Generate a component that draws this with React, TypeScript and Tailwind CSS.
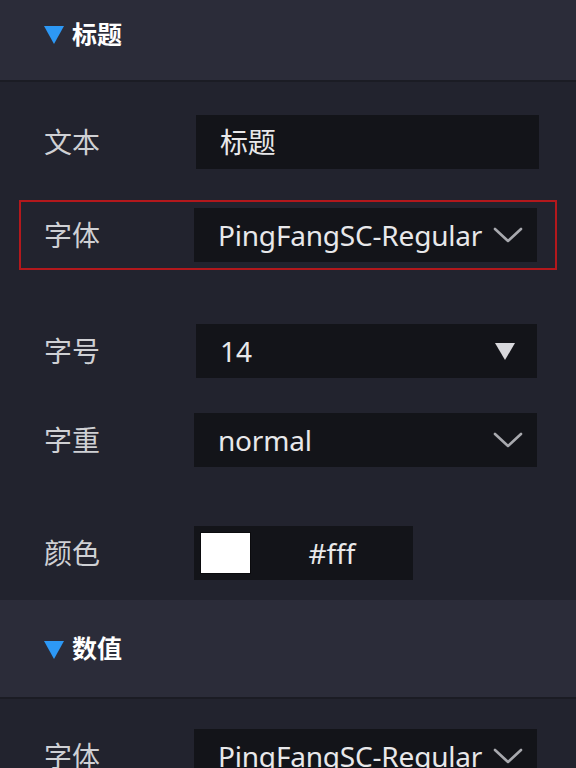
import React from "react";

const cjk = "font-['Noto_Sans','Noto_Sans_CJK_SC',sans-serif]";

function Chevron() {
  return (
    <svg width="30" height="18" viewBox="0 0 30 18" className="shrink-0">
      <polyline
        points="2,3 15,15 28,3"
        fill="none"
        stroke="#a8a9ae"
        strokeWidth="2.6"
        strokeLinecap="round"
        strokeLinejoin="round"
      />
    </svg>
  );
}

function SectionHeader({ title, className }: { title: string; className?: string }) {
  return (
    <div className={`flex items-center bg-[#2b2c39] pl-[44px] border-b-2 border-[#1b1c24] ${className ?? ""}`}>
      <span className="mr-[8px] mt-[2px] h-0 w-0 border-x-[10px] border-t-[18px] border-x-transparent border-t-[#2d98f5]" />
      <span className="text-[25px] font-bold leading-none text-white">{title}</span>
    </div>
  );
}

function Row({
  label,
  children,
  className,
  labelWidth = "w-[196px]",
}: {
  label: string;
  children: React.ReactNode;
  className?: string;
  labelWidth?: string;
}) {
  return (
    <div className={`flex items-center ${className ?? ""}`}>
      <div className={`${labelWidth} shrink-0 pl-[44px] text-[28px] text-[#cfd0d4]`}>{label}</div>
      {children}
    </div>
  );
}

function Field({ value, icon, width = "w-[343px]" }: { value: string; icon?: React.ReactNode; width?: string }) {
  return (
    <div className={`flex h-[54px] ${width} items-center justify-between bg-[#131419] pl-[24px] pr-[14px]`}>
      <span className="whitespace-nowrap text-[28px] tracking-[-0.2px] text-[#e8e8ea]">{value}</span>
      {icon}
    </div>
  );
}

export default function App() {
  return (
    <div className={`h-[768px] w-[576px] overflow-hidden bg-[#22232e] ${cjk}`}>
      <SectionHeader title="标题" className="h-[82px] pb-[12px]" />

      <Row label="文本" className="mt-[33px]">
        <Field value="标题" />
      </Row>

      {/* highlighted row */}
      <div className="mx-[19px] mt-[31px] border-2 border-[#b3181c] py-[6px]">
        <Row label="字体" className="-ml-[21px]" labelWidth="w-[194px]">
          <Field value="PingFangSC-Regular" icon={<Chevron />} />
        </Row>
      </div>

      <Row label="字号" className="mt-[54px]">
        <div className="flex h-[54px] w-[341px] items-center justify-between bg-[#131419] pl-[24px] pr-[22px]">
          <span className="text-[28px] text-[#e8e8ea]">14</span>
          <span className="h-0 w-0 border-x-[10px] border-t-[17px] border-x-transparent border-t-[#d8d8dc]" />
        </div>
      </Row>

      <Row label="字重" className="mt-[35px]" labelWidth="w-[194px]">
        <Field value="normal" icon={<Chevron />} />
      </Row>

      <Row label="颜色" className="mt-[59px]" labelWidth="w-[194px]">
        <div className="flex h-[54px] w-[219px] items-center bg-[#131419] pl-[6px]">
          <div className="h-[42px] w-[51px] border border-[#0b0b0e] bg-white" />
          <span className="flex-1 text-center text-[28px] text-[#e8e8ea]">#fff</span>
        </div>
      </Row>

      <SectionHeader title="数值" className="mt-[20px] h-[99px]" />

      <Row label="字体" className="mt-[30px]" labelWidth="w-[194px]">
        <Field value="PingFangSC-Regular" icon={<Chevron />} />
      </Row>
    </div>
  );
}
